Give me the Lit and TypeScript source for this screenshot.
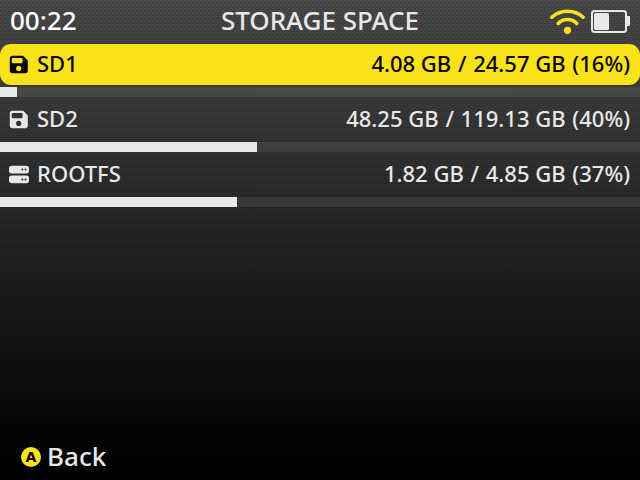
import { LitElement, html, css, svg } from "lit";
import { customElement, property, state } from "lit/decorators.js";
import { classMap } from "lit/directives/class-map.js";

type Volume = {
  name: string;
  kind: "card" | "disk";
  used: string;
  total: string;
  percent: number;
  fill: number;
};

const VOLUMES: Volume[] = [
  { name: "SD1", kind: "card", used: "4.08 GB", total: "24.57 GB", percent: 16, fill: 2.6 },
  { name: "SD2", kind: "card", used: "48.25 GB", total: "119.13 GB", percent: 40, fill: 40.2 },
  { name: "ROOTFS", kind: "disk", used: "1.82 GB", total: "4.85 GB", percent: 37, fill: 37 },
];

const cardShape = svg`<path fill-rule="evenodd" d="M3.4 .8H14.2L18.8 5.4V15.6a2.6 2.6 0 0 1-2.6 2.6H3.4a2.6 2.6 0 0 1-2.6-2.6V3.4A2.6 2.6 0 0 1 3.4 .8ZM4 2.9a1.2 1.2 0 0 0-1.2 1.2V7a1.2 1.2 0 0 0 1.2 1.2H12.4a1.2 1.2 0 0 0 1.2-1.2V4.1a1.2 1.2 0 0 0-1.2-1.2ZM9.7 10.8a2.6 2.6 0 1 0 0 5.2a2.6 2.6 0 0 0 0-5.2Z"/>`;
const diskShape = svg`<path fill-rule="evenodd" d="M2.6 .8H17.4A2.6 2.6 0 0 1 20 3.4V5.8A2.6 2.6 0 0 1 17.4 8.4H2.6A2.6 2.6 0 0 1 0 5.8V3.4A2.6 2.6 0 0 1 2.6 .8ZM13.4 3.6a1 1 0 1 0 0 2a1 1 0 0 0 0-2ZM16.5 3.6a1 1 0 1 0 0 2a1 1 0 0 0 0-2ZM2.6 10.6H17.4A2.6 2.6 0 0 1 20 13.2V15.6A2.6 2.6 0 0 1 17.4 18.2H2.6A2.6 2.6 0 0 1 0 15.6V13.2A2.6 2.6 0 0 1 2.6 10.6ZM13.4 13.4a1 1 0 1 0 0 2a1 1 0 0 0 0-2ZM16.5 13.4a1 1 0 1 0 0 2a1 1 0 0 0 0-2Z"/>`;

@customElement("volume-row")
export class VolumeRow extends LitElement {
  @property({ attribute: false }) volume!: Volume;
  @property({ type: Boolean }) selected = false;

  static styles = css`
    :host {
      display: block;
    }
    .row {
      display: flex;
      align-items: center;
      gap: 8px;
      width: 100%;
      min-height: 41px;
      padding: 0 10px 0 9px;
      border: 0;
      border-radius: 11px;
      background: none;
      color: #e8e8e8;
      font: 500 22px/30px "Noto Sans", sans-serif;
      text-align: left;
      outline: none;
    }
    .selected {
      background: #f8e31a;
      color: #0c0406;
    }
    .icon {
      flex: none;
      width: 20px;
      height: 20px;
      fill: currentColor;
    }
    .name,
    .usage {
      padding-bottom: 4px;
    }
    .name {
      flex: 1;
    }
    .part {
      margin-left: 1px;
    }
    .track {
      height: 10px;
      margin: 2px 0;
      background: rgb(255 255 255 / 0.08);
    }
    .fill {
      height: 100%;
      background: #e8e8e8;
    }
  `;

  render() {
    const v = this.volume;
    return html`
      <button class=${classMap({ row: true, selected: this.selected })}>
        <svg class="icon" viewBox="0 0 20 20" aria-hidden="true">
          ${v.kind === "card" ? cardShape : diskShape}
        </svg>
        <span class="name">${v.name}</span>
        <span class="usage"
          >${v.used} <span class="part">/</span> <span class="part">${v.total}</span>
          <span class="part">(${v.percent}%)</span></span
        >
      </button>
      <div class="track" role="progressbar" aria-label=${v.name} aria-valuenow=${v.fill}>
        <div class="fill" style="width:${v.fill}%"></div>
      </div>
    `;
  }
}

@customElement("app-root")
export class AppRoot extends LitElement {
  @state() private current = 0;

  static styles = css`
    :host {
      display: flex;
      flex-direction: column;
      min-height: 100vh;
      color: #e8e8e8;
      font: 500 26px/36px "Noto Sans", sans-serif;
      /* fine woven texture over a vertical fade */
      background:
        repeating-linear-gradient(0deg, rgb(0 0 0 / 0.12) 0 1px, transparent 1px 2px),
        repeating-conic-gradient(rgb(0 0 0 / 0.1) 0 25%, transparent 0 50%) 0 0 / 4px 4px,
        linear-gradient(#4e4e4e, #000 96%);
    }
    .top {
      display: grid;
      grid-template-columns: 1fr auto 1fr;
      align-items: center;
      height: 44px;
      padding: 0 10px;
      box-sizing: border-box;
    }
    .clock {
      color: #fff;
    }
    .clock,
    .title {
      margin: 0;
      padding-bottom: 4px;
      font: inherit;
    }
    .status {
      display: flex;
      justify-content: flex-end;
      align-items: center;
      gap: 6px;
    }
    .wifi {
      width: 35px;
      height: 26px;
    }
    .battery {
      width: 39px;
      height: 24px;
    }
    .volumes {
      flex: 1;
      margin: 0;
      padding: 0;
      list-style: none;
    }
    .foot {
      padding: 0 21px 6px;
    }
    .back {
      display: flex;
      align-items: center;
      gap: 6px;
      padding: 0;
      border: 0;
      background: none;
      color: inherit;
      font: inherit;
    }
    .key {
      width: 20px;
      height: 20px;
      margin-top: 2px;
      border-radius: 50%;
      background: #f8e31a;
      color: #0c0406;
      font: bold 14px/20px "DejaVu Sans", sans-serif;
      text-align: center;
    }
  `;

  render() {
    return html`
      <header class="top">
        <span class="clock">00:22</span>
        <h1 class="title">STORAGE SPACE</h1>
        <div class="status">
          <svg class="wifi" viewBox="0 0 35 26" role="img" aria-label="Wi-Fi">
            <g fill="none" stroke="#f8e31a" stroke-width="3.6" stroke-linecap="round">
              <path d="M1.9 8.2C10.5 .2 24.5 .2 33.1 8.2" />
              <path d="M8.2 14.4C13.2 9.2 21.8 9.2 26.8 14.4" />
            </g>
            <circle cx="17.5" cy="21.3" r="3.6" fill="#f8e31a" />
          </svg>
          <svg class="battery" viewBox="0 0 39 24" role="img" aria-label="Battery">
            <rect x="1" y="1" width="34" height="21" rx="2.5" fill="none" stroke="#e8e8e8" stroke-width="2" />
            <rect x="3" y="3" width="15" height="17" rx="1.5" fill="#e8e8e8" />
            <path d="M36 6H38a1 1 0 0 1 1 1V15a1 1 0 0 1-1 1H36Z" fill="#e8e8e8" />
          </svg>
        </div>
      </header>
      <ul class="volumes">
        ${VOLUMES.map(
          (v, i) => html`<li @click=${() => (this.current = i)}>
            <volume-row .volume=${v} ?selected=${i === this.current}></volume-row>
          </li>`,
        )}
      </ul>
      <footer class="foot">
        <button class="back"><span class="key">A</span>Back</button>
      </footer>
    `;
  }
}
